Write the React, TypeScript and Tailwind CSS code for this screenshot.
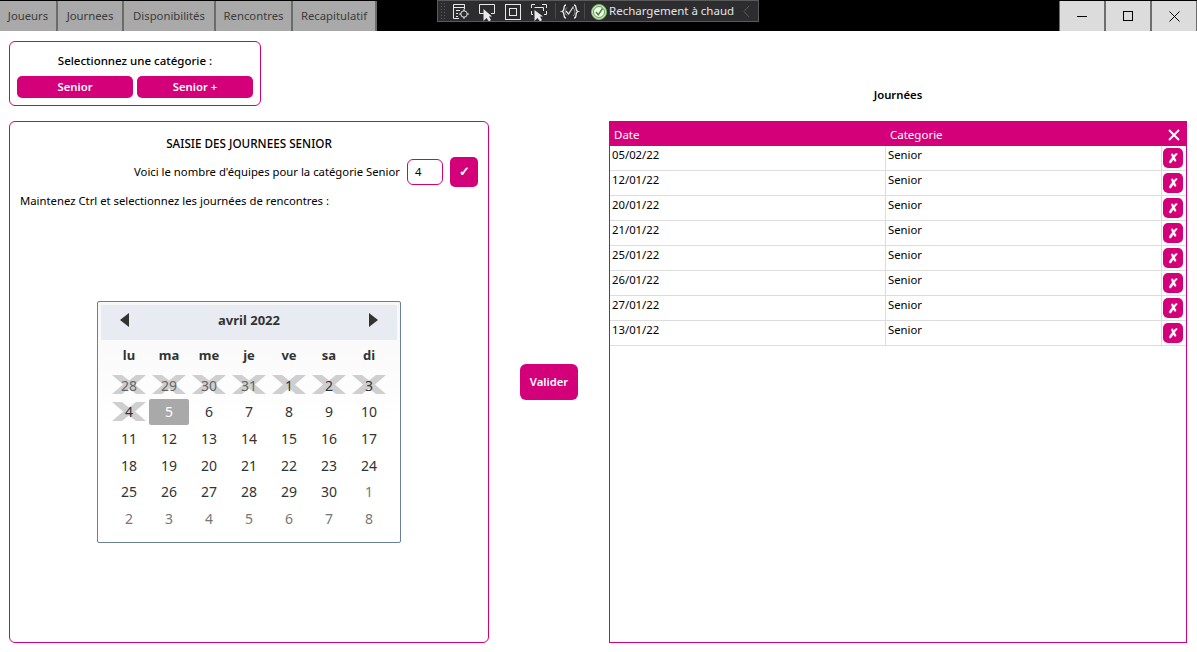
import React from "react";

const font = { fontFamily: '"Noto Sans", "Open Sans", sans-serif' };
const tabs = ["Joueurs", "Journees", "Disponibilités", "Rencontres", "Recapitulatif"];
const tabWidths = ["w-[58px]", "w-[66px]", "w-[92px]", "w-[77px]", "w-[84px]"];
const rows = ["05/02/22", "12/01/22", "20/01/22", "21/01/22", "25/01/22", "26/01/22", "27/01/22", "13/01/22"];
const days: [string, "x" | "sel" | "n" | "o", boolean?][] = [
  ["28", "x", true], ["29", "x", true], ["30", "x", true], ["31", "x", true], ["1", "x"], ["2", "x"], ["3", "x"],
  ["4", "x"], ["5", "sel"], ["6", "n"], ["7", "n"], ["8", "n"], ["9", "n"], ["10", "n"],
  ["11", "n"], ["12", "n"], ["13", "n"], ["14", "n"], ["15", "n"], ["16", "n"], ["17", "n"],
  ["18", "n"], ["19", "n"], ["20", "n"], ["21", "n"], ["22", "n"], ["23", "n"], ["24", "n"],
  ["25", "n"], ["26", "n"], ["27", "n"], ["28", "n"], ["29", "n"], ["30", "n"], ["1", "o"],
  ["2", "o"], ["3", "o"], ["4", "o"], ["5", "o"], ["6", "o"], ["7", "o"], ["8", "o"],
];

function Blackout() {
  return (
    <svg className="absolute left-[3px] top-[3px]" width="34" height="19" viewBox="0 0 34 19">
      <path d="M0 0H10L17 5.500L24 0H34L23 9.500L34 19H24L17 13.500L10 19H0L11 9.500Z" fill="#cfcfcf" />
    </svg>
  );
}

function Toolbar() {
  return (
    <div className="absolute left-[437px] top-0 h-[22px] w-[322px] bg-[#2d2d30] border border-[#5a5a5a] flex items-center text-[#dcdcdc]">
      <svg width="320" height="20" viewBox="0 0 320 20" className="absolute left-0 top-0" fill="none" stroke="#e8e8e8" strokeWidth="1">
        <path d="M3.500 2v17M6.500 2v17" stroke="#5a5a5a" strokeDasharray="1 2" />
        <path d="M21 17.500H15.500V3.500H26.500V8M15.500 6.500H26.500M18 9.500H22M18 12.500H20M18 15.500H20" />
        <circle cx="26" cy="13" r="3.200" />
        <path d="M26 8V10M26 16V18M21 13H23M29 13H31" />
        <path d="M46 12.500H41.500V3.500H56.500V12.500H53" />
        <path d="M45.500 8L45.500 20L48.500 17L51 20.500L53 19L51 15.500H54Z" fill="#e8e8e8" stroke="none" />
        <rect x="67.500" y="3.500" width="15" height="15" />
        <rect x="71.500" y="7.500" width="7" height="7" />
        <path d="M93.500 7V3.500H97M104 3.500H108.500V7M108.500 10V13.500H106M93.500 10V13.500H95M96.500 6.500H105.500V10" />
        <path d="M96.500 9L96.500 20L99.500 17L102 20.500L104 19L102 15.500H105Z" fill="#e8e8e8" stroke="none" />
        <path d="M117.500 2V18M146.500 2V18" stroke="#4a4a4a" />
        <path d="M128 4C124.500 4 127.500 9.500 124 10.500C127.500 11.500 124.500 17 128 17M136 4C139.500 4 136.500 9.500 140 10.500C136.500 11.500 139.500 17 136 17" strokeWidth="1.300" />
        <path d="M128 10L130.500 13L135.500 5.500" strokeWidth="1.200" />
        <path d="M129 6.500A5 5 0 0 0 129 14.500M135 7A5 5 0 0 1 135 15" strokeWidth="0.800" stroke="#aaa" />
        <path d="M311 5L306 10.500L311 16" stroke="#5c5c5c" />
      </svg>
      <svg className="absolute left-[153px] top-[2.500px]" width="16" height="16" viewBox="0 0 16 16">
        <circle cx="8" cy="8" r="7.500" fill="#cfe7c4" stroke="#7fb46b" />
        <circle cx="8" cy="8" r="5.500" fill="#f4f8f1" stroke="#5fa046" />
        <path d="M5 8L7.300 10.800L11.500 4.500" fill="none" stroke="#3f8a2c" strokeWidth="1.500" />
      </svg>
      <span className="absolute left-[171px] top-0 text-[11.500px] leading-[20px] whitespace-nowrap text-[#e4e4e4]">Rechargement à chaud</span>
    </div>
  );
}

export default function App() {
  return (
    <div className="w-[1197px] h-[652px] bg-white relative overflow-hidden text-black text-[11.300px]" style={font}>
      <div className="h-[31px] bg-black flex pt-px">
        {tabs.map((t, i) => (
          <div key={t} className={`${tabWidths[i]} h-[30px] bg-[#a9a9a9] border-r-2 border-[#6b6b6b] text-[#3c3c3c] flex items-center justify-center text-[11.300px]`}>
            {t}
          </div>
        ))}
        <div className="flex-1" />
        <div className="flex w-[138px] h-[30px] border-x border-[#6e6e6e]">
          <div className="flex-1 bg-[#dcdcdc] border-r-2 border-[#6e6e6e] flex items-center justify-center"><div className="w-[10px] h-px bg-black" /></div>
          <div className="flex-1 bg-[#dcdcdc] border-r-2 border-[#6e6e6e] flex items-center justify-center"><div className="w-[10px] h-[10px] border border-black" /></div>
          <div className="flex-1 bg-[#dcdcdc] flex items-center justify-center">
            <svg width="11" height="11" viewBox="0 0 11 11" stroke="black" strokeWidth="1"><path d="M0.500 0.500L10.500 10.500M10.500 0.500L0.500 10.500" /></svg>
          </div>
        </div>
      </div>
      <Toolbar />

      <div className="flex pl-[9px] pt-[10px]">
        <div className="w-[480px] shrink-0 flex flex-col">
          <div className="w-[252px] h-[65px] border border-[#d4007a] rounded-[6px] flex flex-col items-center pt-[11px]">
            <div className="text-[11.500px] font-medium leading-[16px]">Selectionnez une catégorie :</div>
            <div className="flex gap-[4px] mt-[7px]">
              <div className="w-[116px] h-[22px] bg-[#d4007a] rounded-[5px] text-white font-semibold flex items-center justify-center pt-px">Senior</div>
              <div className="w-[116px] h-[22px] bg-[#d4007a] rounded-[5px] text-white font-semibold flex items-center justify-center pt-px">Senior +</div>
            </div>
          </div>
          <div className="mt-[15px] h-[522px] border border-[#d4007a] rounded-[6px] flex flex-col">
            <div className="text-center font-medium text-[11.700px] leading-[16px] mt-[13px]">SAISIE DES JOURNEES SENIOR</div>
            <div className="flex items-center justify-end pr-[10px] mt-[6px]">
              <span className="mr-[7px]">Voici le nombre d'équipes pour la catégorie Senior</span>
              <div className="w-[36px] h-[26px] border border-[#d4007a] rounded-[6px] flex items-center pl-[7px]">4</div>
              <div className="w-[28px] h-[30px] bg-[#d4007a] rounded-[5px] ml-[7px] flex items-center justify-center text-white font-bold text-[13px]">✓</div>
            </div>
            <div className="pl-[10px] mt-[6px] leading-[16px]">Maintenez Ctrl et selectionnez les journées de rencontres :</div>

            <div className="ml-[87px] mt-[92px] w-[304px] h-[242px] border border-[#6b8096] rounded-[2px] bg-gradient-to-b from-[#f7f7f7] via-white to-white p-[3px]">
              <div className="h-[35px] bg-[#e8ecf2] flex items-center justify-between px-[19px] pb-[6px] text-[#333]">
                <svg width="9" height="14" viewBox="0 0 9 14"><path d="M9 0V14L0 7Z" fill="#333" /></svg>
                <span className="font-bold text-[13px] relative top-px">avril 2022</span>
                <svg width="9" height="14" viewBox="0 0 9 14"><path d="M0 0V14L9 7Z" fill="#333" /></svg>
              </div>
              <div className="grid grid-cols-7 w-[280px] ml-[8px]">
                {["lu", "ma", "me", "je", "ve", "sa", "di"].map((d) => (
                  <div key={d} className="h-[30px] pt-[2px] flex items-center justify-center font-bold text-[13px] text-[#333]">{d}</div>
                ))}
              </div>
              <div className="grid grid-cols-7 w-[280px] ml-[8px] mt-[2px] auto-rows-[26.670px]">
                {days.map(([d, k, dim], i) => (
                  <div key={i} className={`relative flex items-center justify-center text-[14px] ${k === "sel" ? "bg-[#a9a9a9] text-white rounded-[2px]" : k === "o" ? "text-[#777]" : dim ? "text-[#666]" : "text-[#333]"}`}>
                    {k === "x" && <Blackout />}
                    <span className="relative">{d}</span>
                  </div>
                ))}
              </div>
            </div>
          </div>
        </div>

        <div className="w-[120px] shrink-0 flex justify-center">
          <div className="mt-[323px] w-[58px] h-[36px] pt-px bg-[#d4007a] rounded-[6px] text-white font-semibold flex items-center justify-center">Valider</div>
        </div>

        <div className="w-[578px] shrink-0 flex flex-col">
          <div className="h-[80px] flex items-end justify-center pb-[18px] font-semibold leading-[16px]">Journées</div>
          <div className="h-[522px] border border-[#d4007a] flex flex-col">
            <div className="h-[24px] bg-[#d4007a] text-white flex items-center shrink-0 pt-[2px] text-[11.500px]">
              <div className="w-[280px] pl-[4px]">Date</div>
              <div className="flex-1">Categorie</div>
              <svg className="mr-[6px]" width="12" height="12" viewBox="0 0 12 12" stroke="white" strokeWidth="2"><path d="M1 1L11 11M11 1L1 11" /></svg>
            </div>
            {rows.map((r) => (
              <div key={r} className="h-[25px] flex border-b border-[#dddddd] shrink-0">
                <div className="w-[276px] border-r border-[#dddddd] pl-[2px] leading-[18px]">{r}</div>
                <div className="w-[276px] border-r border-[#dddddd] pl-[2px] leading-[18px]">Senior</div>
                <div className="flex-1 pl-[1px] pt-[2px]">
                  <div className="w-[20px] h-[20px] bg-[#d4007a] rounded-[5px] text-white font-bold text-[13px] flex items-center justify-center leading-none">✗</div>
                </div>
              </div>
            ))}
          </div>
        </div>
      </div>
    </div>
  );
}
